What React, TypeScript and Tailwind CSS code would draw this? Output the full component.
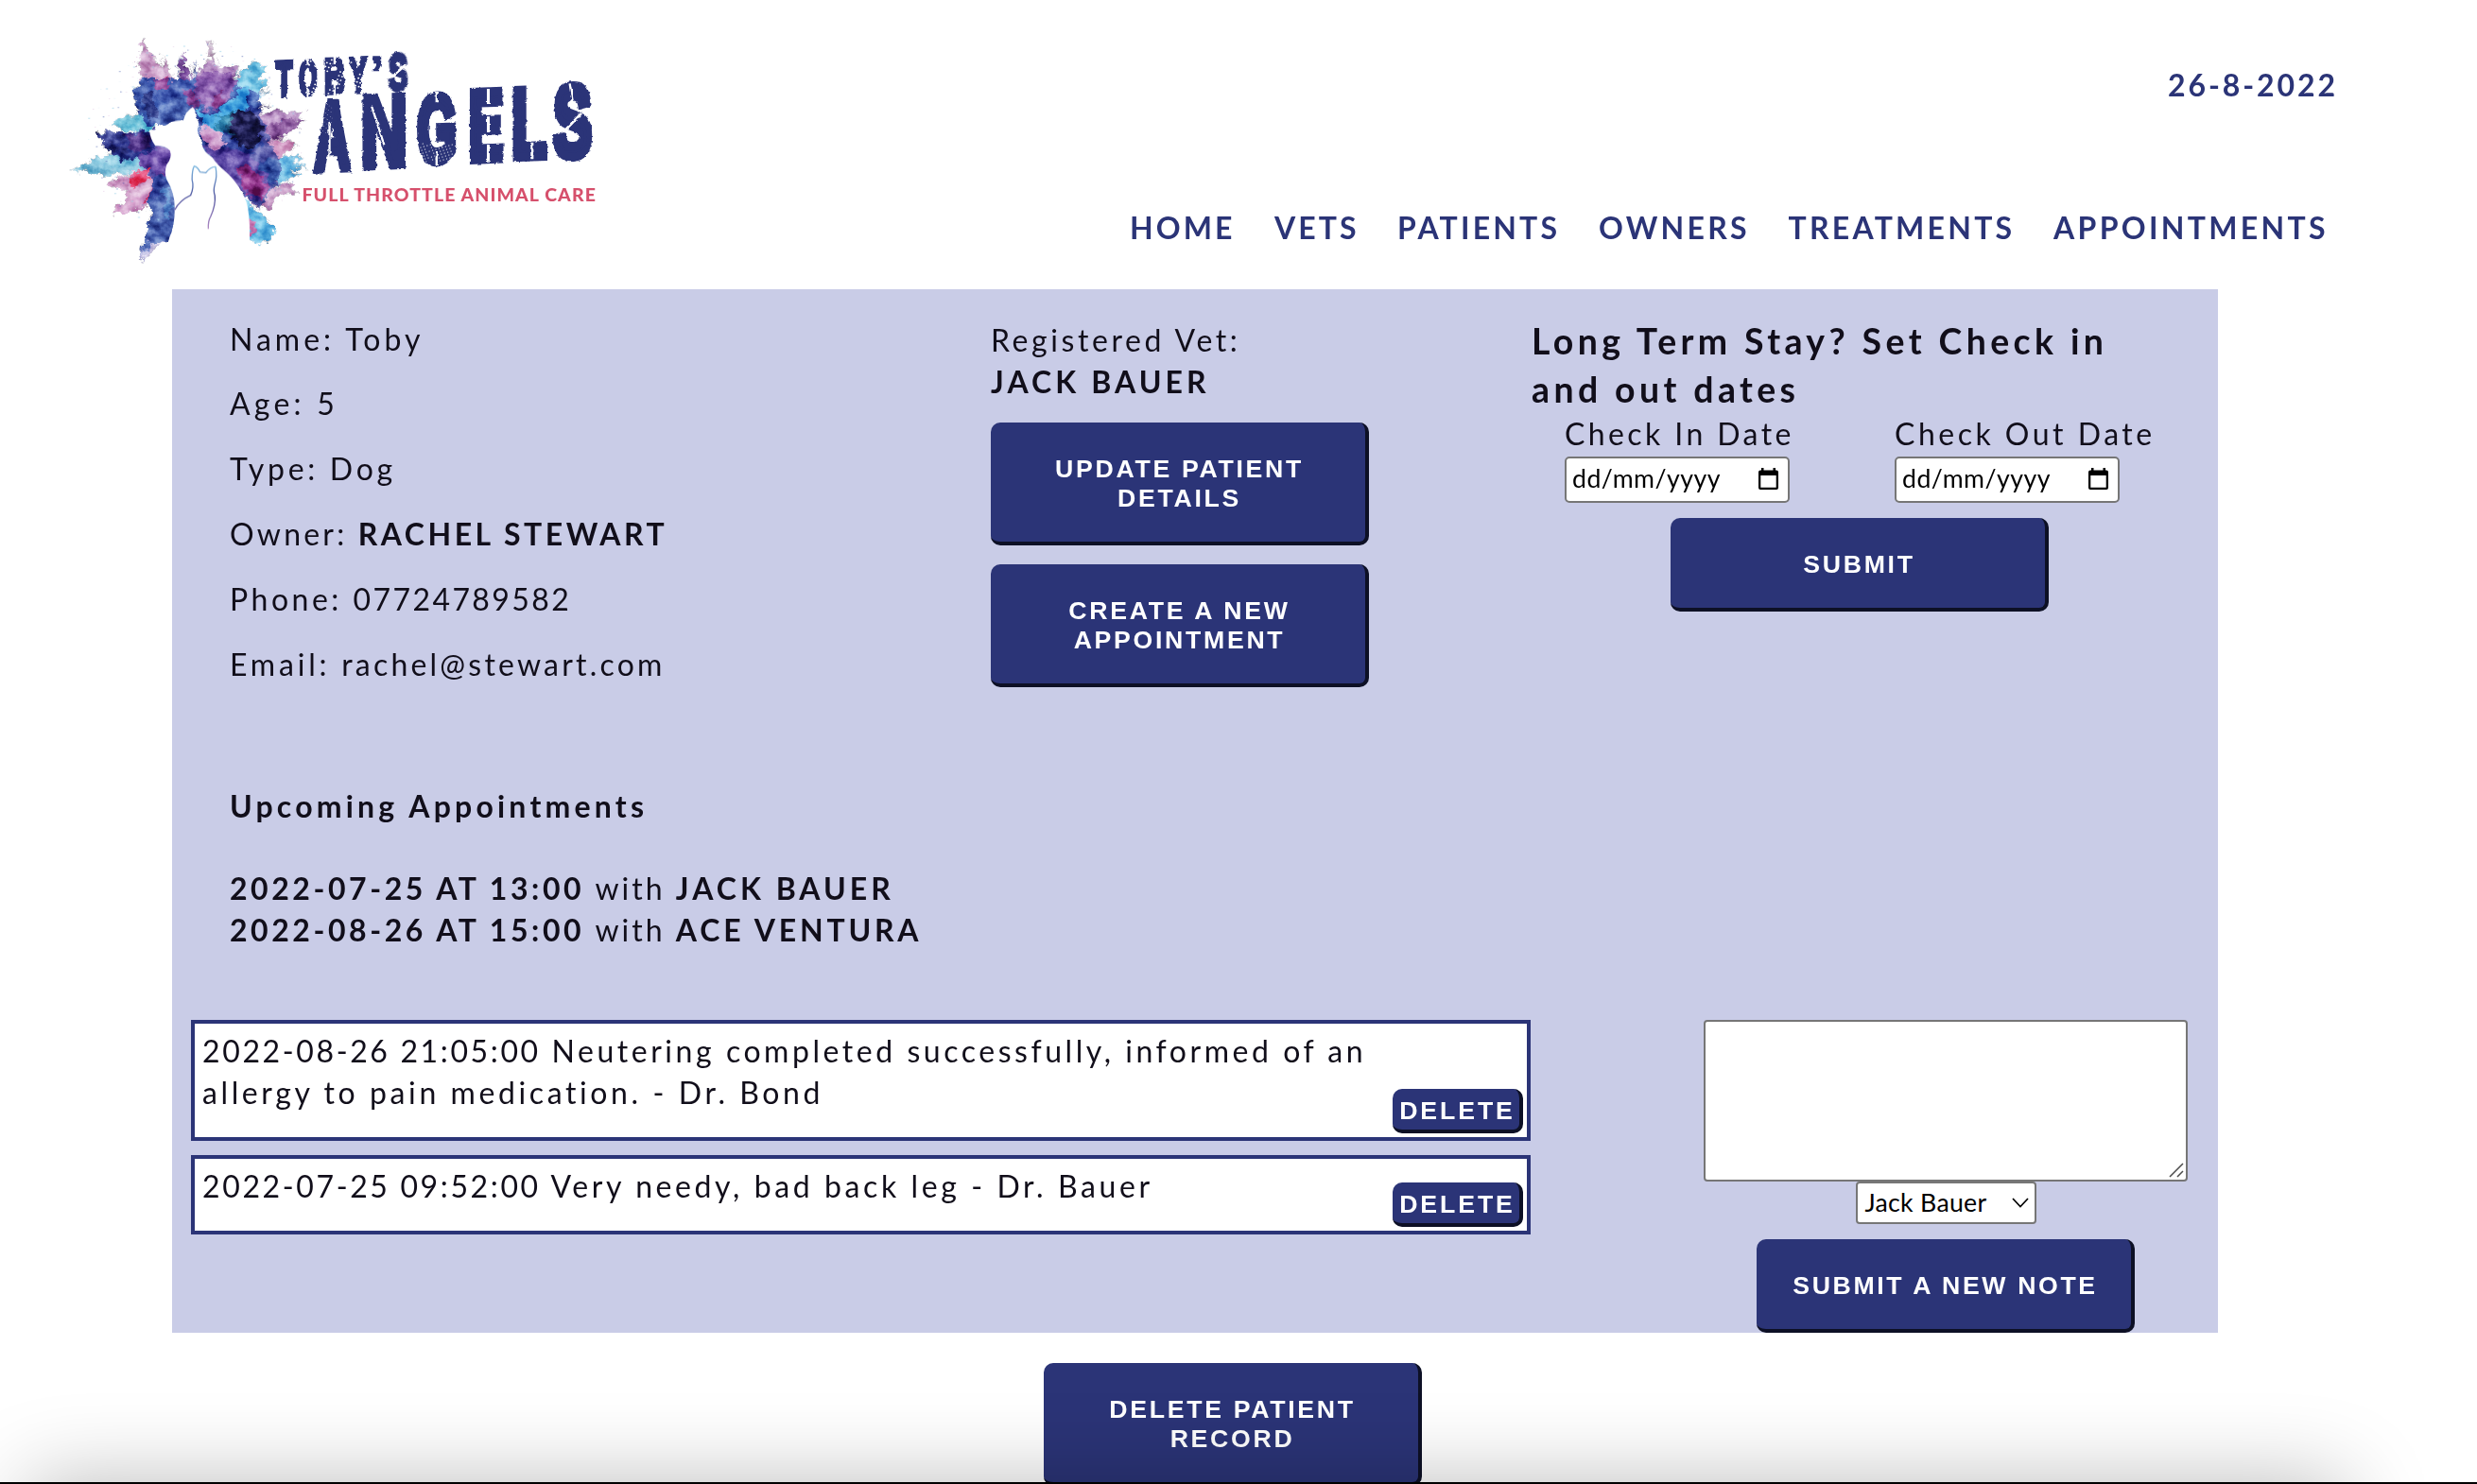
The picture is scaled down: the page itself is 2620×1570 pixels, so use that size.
import type { ReactNode } from "react";

const navItems = [
  { label: "HOME", cls: "w-[153px] tracking-[3.08px]" },
  { label: "VETS", cls: "w-[130px] tracking-[3.07px]" },
  { label: "PATIENTS", cls: "w-[213px] tracking-[3.2px]" },
  { label: "OWNERS", cls: "w-[200.5px] tracking-[3.27px]" },
  { label: "TREATMENTS", cls: "w-[280.5px] tracking-[3.25px]" },
  { label: "APPOINTMENTS", cls: "w-[294px] tracking-[3.32px]" },
];

const wordmark = [
  { ch: "T", x: 608, y: 135, w: 42, h: 108 },
  { ch: "O", x: 672, y: 131, w: 45, h: 108 },
  { ch: "B", x: 745, y: 127, w: 49, h: 107 },
  { ch: "Y", x: 811, y: 124, w: 44, h: 107 },
  { ch: "S", x: 920, y: 111, w: 47, h: 113 },
  { ch: "A", x: 714, y: 268, w: 96, h: 208 },
  { ch: "N", x: 854, y: 250, w: 102, h: 216 },
  { ch: "G", x: 1002, y: 240, w: 97, h: 213 },
  { ch: "E", x: 1149, y: 231, w: 80, h: 215 },
  { ch: "L", x: 1269, y: 224, w: 82, h: 214 },
  { ch: "S", x: 1378, y: 209, w: 95, h: 228 },
];

/* ink boxes of the bold letters at a 100 unit font size */
const ink: Record<string, [number, number, number]> = {
  T: [2, 57, 69],
  O: [4, 70, 71],
  B: [7, 62, 69],
  Y: [3, 61, 69],
  S: [3, 60, 71],
  A: [1, 71, 69],
  N: [7, 58, 69],
  G: [4, 69, 71],
  E: [7, 56, 69],
  L: [7, 52, 69],
};

const powder: { c: string; d: string; o?: number }[] = [
  { c: "#d3a5cc", d: "M225 150 L238 62 L262 110 L305 175 L320 260 L250 260 Z" },
  { c: "#b58bc0", d: "M385 170 L425 130 L440 150 L495 150 L500 200 L460 300 L400 280 Z" },
  { c: "#d9b3d6", d: "M412 105 L425 65 L434 110 L424 150 Z", o: 0.7 },
  { c: "#7b4a9a", d: "M341 150 L348 98 L360 130 L372 250 L343 250 Z" },
  { c: "#6fc6e6", d: "M480 210 L540 140 L580 145 L560 200 L590 190 L540 280 L460 320 Z" },
  { c: "#6cc3d9", d: "M150 335 L215 295 L265 300 L270 350 L190 358 Z" },
  { c: "#7cc4dc", d: "M45 480 L110 435 L200 420 L260 450 L220 490 L120 498 Z" },
  { c: "#d6a2ca", d: "M135 520 L210 490 L290 480 L275 560 L150 620 L200 560 Z" },
  { c: "#d49cc8", d: "M160 615 L230 560 L290 550 L240 600 Z" },
  { c: "#3a58ac", d: "M215 215 L240 190 L340 195 L375 190 L480 200 L560 240 L570 400 L600 540 L560 590 L500 540 L400 420 L380 290 L340 325 L255 345 L215 270 Z" },
  { c: "#4a48a0", d: "M190 370 L270 350 L320 400 L310 520 L250 500 L230 440 Z" },
  { c: "#b184bb", d: "M540 300 L600 290 L690 295 L640 340 L690 320 L620 380 L550 390 Z" },
  { c: "#845094", d: "M560 350 L640 315 L680 330 L600 390 Z" },
  { c: "#d79bc4", d: "M540 410 L620 385 L668 400 L610 440 L540 460 Z" },
  { c: "#6cbfe6", d: "M540 470 L620 440 L680 432 L650 460 L695 470 L640 480 L680 500 L600 520 Z" },
  { c: "#c592c0", d: "M560 540 L640 520 L668 550 L610 560 L590 600 L540 590 Z" },
  { c: "#2c3d94", d: "M470 240 L560 280 L590 400 L620 470 L600 540 L560 600 L500 540 L410 420 L380 290 Z", o: 0.8 },
  { c: "#232a70", d: "M235 240 L262 235 L280 290 L262 320 L245 300 Z", o: 0.8 },
  { c: "#4fb2e4", d: "M383 280 L430 310 L480 260 L530 200 L520 290 L450 370 L410 350 Z" },
  { c: "#8a5aa8", d: "M385 180 L450 160 L500 190 L460 280 L415 290 L380 250 Z" },
  { c: "#d9a5cf", d: "M395 340 L430 340 L470 400 L440 420 L405 390 Z" },
  { c: "#272f86", d: "M112 352 L180 365 L260 355 L280 400 L250 430 L180 450 L125 400 Z" },
  { c: "#472a7a", d: "M190 370 L260 365 L260 410 L210 425 Z" },
  { c: "#6a4aa4", d: "M230 430 L320 400 L320 500 L240 480 Z" },
  { c: "#e8456c", d: "M200 500 L245 472 L265 480 L250 515 L205 535 Z" },
  { c: "#d8457c", d: "M262 535 L290 490 L300 520 L275 570 L240 585 Z" },
  { c: "#3450a4", d: "M270 500 L330 480 L340 640 L315 700 L260 715 L235 770 L245 690 L265 620 L250 590 Z" },
  { c: "#5aa2da", d: "M295 530 L315 540 L312 640 L295 620 Z", o: 0.5 },
  { c: "#b8aede", d: "M232 772 L250 718 L300 700 L255 750 Z", o: 0.8 },
  { c: "#17163f", d: "M480 300 L540 290 L570 350 L545 410 L500 400 L470 350 Z" },
  { c: "#1f6f92", d: "M445 310 L485 290 L480 370 L440 360 Z", o: 0.7 },
  { c: "#5c46a0", d: "M400 400 L520 420 L590 500 L560 580 L500 540 L430 450 Z" },
  { c: "#a82c7c", d: "M500 470 L535 465 L590 540 L570 570 L520 550 Z", o: 0.7 },
  { c: "#c83c86", d: "M270 200 L300 180 L310 215 L280 230 Z", o: 0.6 },
  { c: "#b03484", d: "M352 230 L370 220 L395 265 L370 290 Z", o: 0.6 },
  { c: "#8f2c74", d: "M430 250 L458 230 L465 275 L440 290 Z", o: 0.6 },
  { c: "#62bfe8", d: "M505 550 L545 600 L605 660 L600 685 L560 715 L525 700 Z" },
  { c: "#d486b8", d: "M528 630 L548 640 L548 690 L530 695 Z" },
];

/* [from, to, reach, colours] in degrees clockwise from the right */
const sectors: [number, number, number, string[]][] = [
  [-25, -5, 275, ["#8d5fa8", "#b184bb", "#c79ccb"]],
  [-5, 10, 260, ["#d79bc4", "#b184bb"]],
  [10, 28, 290, ["#6cbfe6", "#8fd0ee", "#5a7cc4"]],
  [28, 50, 270, ["#8a4a98", "#c592c0"]],
  [148, 160, 270, ["#d6a2ca", "#c98abf"]],
  [163, 174, 300, ["#7cc4dc", "#6fb8d8"]],
  [180, 190, 270, ["#272f86", "#3c3f96"]],
  [193, 206, 240, ["#6cc3d9", "#8fd0e4"]],
  [214, 236, 255, ["#3a66b4", "#5aa8d8", "#7c6cb8"]],
  [236, 250, 285, ["#d3a5cc", "#c48abf"]],
  [254, 268, 270, ["#5a6cb8", "#7b4a9a"]],
  [274, 294, 265, ["#b58bc0", "#9a6cb0"]],
  [296, 322, 250, ["#62b8e0", "#8fd0ee", "#4a7cc0"]],
  [322, 334, 225, ["#7a4a98", "#5c46a0"]],
];

const spikes = sectors.flatMap(([from, to, reach, colours], s) =>
  Array.from({ length: Math.round((to - from) / 2) }, (_, i) => {
    const a = ((from + i * 2 + ((i * 7 + s) % 3) * 0.5) * Math.PI) / 180;
    const r = reach * (0.78 + (((i * 37 + s * 11) % 17) / 17) * 0.27);
    const p = (ang: number, rad: number) =>
      `${(395 + Math.cos(ang) * rad).toFixed(1)} ${(400 + Math.sin(ang) * rad * 1.08).toFixed(1)}`;
    return {
      d: `M${p(a - 0.05, 150)} L${p(a - 0.012, r * 0.9)} L${p(a, r)} L${p(a + 0.014, r * 0.85)} L${p(a + 0.05, 150)} Z`,
      c: colours[i % colours.length],
    };
  }),
);

const specks = Array.from({ length: 170 }, (_, i) => {
  const a = i * 2.39996;
  const r = 0.95 + ((i * 37) % 23) / 80;
  const hues = ["#7cc4e4", "#c592c8", "#4c62b0", "#9ad2ea"];
  return {
    x: 385 + Math.cos(a) * 250 * r,
    y: 385 + Math.sin(a) * 255 * r,
    s: 0.8 + (i % 4) * 0.5,
    c: hues[i % 4],
  };
}).filter((p) => !(p.x > 600 && p.y < 300) && p.y > 80 && p.y < 640 && p.x < 680);

function Logo() {
  return (
    <svg className="h-[270px] w-[600px]" viewBox="0 0 1568 810" preserveAspectRatio="none">
      <defs>
        <filter id="powder" x="-10%" y="-10%" width="120%" height="120%" colorInterpolationFilters="sRGB">
          <feTurbulence type="fractalNoise" baseFrequency="0.045" numOctaves="5" seed="8" result="n" />
          <feDisplacementMap in="SourceGraphic" in2="n" scale="38" xChannelSelector="R" yChannelSelector="G" result="d" />
          <feGaussianBlur in="d" stdDeviation="1.8" result="b" />
          <feTurbulence type="fractalNoise" baseFrequency="0.03" numOctaves="4" seed="3" result="t" />
          <feColorMatrix in="t" type="matrix" values="1.8 0 0 0 -0.38  1.8 0 0 0 -0.38  1.8 0 0 0 -0.34  0 0 0 0 1" result="g" />
          <feBlend in="g" in2="b" mode="soft-light" result="m" />
          <feComposite in="m" in2="b" operator="in" />
        </filter>
        <filter id="worn" x="-5%" y="-5%" width="110%" height="110%" colorInterpolationFilters="sRGB">
          <feTurbulence type="fractalNoise" baseFrequency="0.07" numOctaves="3" seed="5" result="n" />
          <feDisplacementMap in="SourceGraphic" in2="n" scale="9" xChannelSelector="R" yChannelSelector="G" />
        </filter>
        <linearGradient id="cat" x1="0" y1="0" x2="0" y2="1">
          <stop offset="0" stopColor="#7cb8e0" />
          <stop offset="0.5" stopColor="#4a4f9c" />
          <stop offset="1" stopColor="#b08ac4" />
        </linearGradient>
      </defs>
      <g filter="url(#powder)">
        {spikes.map((p, i) => (
          <path key={i} d={p.d} fill={p.c} opacity="0.85" />
        ))}
        {powder.map((p, i) => (
          <path key={i} d={p.d} fill={p.c} opacity={p.o ?? 0.95} />
        ))}
      </g>
      {specks.map((p, i) => (
        <circle key={i} cx={p.x} cy={p.y} r={p.s} fill={p.c} opacity="0.7" />
      ))}
      <path
        fill="#fff"
        d="M376 280 Q356 292 350 322 Q312 320 294 348 Q278 354 256 352 Q258 380 272 402 Q302 402 313 418 Q320 440 304 462 Q296 488 304 510 Q326 550 326 600 Q326 660 312 692 Q300 740 290 810 L540 810 L533 690 Q534 620 524 580 Q508 530 474 492 Q440 460 430 440 Q404 420 402 400 Q390 370 386 340 Q384 310 382 290 Z"
      />
      <path
        fill="none"
        stroke="url(#cat)"
        strokeWidth="3.5"
        strokeLinejoin="round"
        d="M326 606 Q340 576 370 560 Q380 535 374 510 Q374 480 380 467 Q390 470 396 486 L412 488 Q424 470 439 469 Q444 500 437 524 Q432 545 437 560 Q440 590 425 628 Q418 640 419 666"
      />
      <g
        filter="url(#worn)"
        fill="#2b3478"
        stroke="#2b3478"
        fontFamily="Liberation Sans"
        fontWeight="700"
        fontSize="100"
      >
        {wordmark.map((l, i) => {
          const [left, width, height] = ink[l.ch];
          const sx = l.w / width;
          const sy = l.h / height;
          return (
            <text
              key={i}
              strokeWidth="9"
              transform={`matrix(${sx} ${-0.045 * sx} 0 ${sy} ${l.x - left * sx} ${l.y + l.h + 2})`}
            >
              {l.ch}
            </text>
          );
        })}
        <text fontSize="150" strokeWidth="5" transform="translate(866 226) scale(0.9 1)">
          ’
        </text>
      </g>
      {/* stencil bridges and worn patches */}
      <g stroke="#fff" fill="none" filter="url(#worn)">
        <path strokeWidth="6" d="M694 120V150M694 218V250M768 118V145M768 210V245M1050 230V262M1050 420V465M1418 205L1428 275M870 275L905 400M754 330V440" />
        <path strokeWidth="8" d="M925 185L965 145M1400 360L1450 300M1193 222V270M1193 310V360M1193 400V452M1314 445V392" />
      </g>
      <g fill="#fff">
        {Array.from({ length: 170 }, (_, i) => (
          <circle
            key={i}
            cx={i % 3 === 0 ? 712 + ((i * 29) % 50) : i % 3 === 1 ? 1005 + ((i * 31) % 90) : 690 + ((i * 47) % 170)}
            cy={i % 3 === 0 ? 268 + ((i * 17) % 95) : i % 3 === 1 ? 395 + ((i * 13) % 60) : 130 + ((i * 19) % 110)}
            r={1 + (i % 3) * 0.8}
          />
        ))}
      </g>
      <text
        x="678"
        y="580"
        fontFamily="Lato"
        fontWeight="900"
        fontSize="54"
        fill="#d6506c"
        textLength="814"
        lengthAdjust="spacingAndGlyphs"
        letterSpacing="3"
      >
        FULL THROTTLE ANIMAL CARE
      </text>
    </svg>
  );
}

function Button({ children, className }: { children: ReactNode; className: string }) {
  return (
    <button
      className={`rounded-[10px] border-t-0 border-l-0 border-r-4 border-b-4 border-[#0d1025] bg-[#2b3477] pt-[3px] pl-[3px] text-center font-['Liberation_Sans',sans-serif] text-[26.67px] leading-[31px] font-bold whitespace-nowrap text-white ${className}`}
    >
      {children}
    </button>
  );
}

function DateField({ label, className }: { label: string; className: string }) {
  return (
    <label className={`block ${className}`}>
      <span className="block whitespace-nowrap">{label}</span>
      <span className="mt-[2px] flex h-[49px] w-[238px] items-center justify-between rounded-[5px] border-2 border-[#767676] bg-white pr-[10px] pl-[6px] text-[26.67px] leading-[44px] tracking-[0.5px] text-black">
        <span className="-mt-1">dd/mm/yyyy</span>
        <svg className="-mt-[3px] h-[23px] w-[21px]" viewBox="0 0 21 23">
          <path
            fill="#000"
            fillRule="evenodd"
            d="M3 0h2.500v2.500h10V0H18v2.500h1a2 2 0 0 1 2 2V21a2 2 0 0 1-2 2H2a2 2 0 0 1-2-2V4.500a2 2 0 0 1 2-2h1zM2.300 8v12.700h16.400V8z"
          />
        </svg>
      </span>
    </label>
  );
}

function Note({ children, className }: { children: ReactNode; className: string }) {
  return (
    <article className={`flex items-end justify-between border-4 border-[#2b3477] bg-white pr-1 pb-1 pl-[8px] ${className}`}>
      <p className="self-start pt-[6.500px] whitespace-nowrap">{children}</p>
      <Button className="h-[47px] w-[138px] shrink-0 tracking-[2.9px]">DELETE</Button>
    </article>
  );
}

export default function App() {
  return (
    <div className="relative h-[1570px] w-[2620px] overflow-hidden bg-white font-['Lato',sans-serif] text-[32px] leading-[44px] text-[#110e1a]">
      <header className="flex h-[306px] pt-5 pl-[60px] font-bold text-[#2b3477]">
        <Logo />
        <div className="ml-[535px] flex w-[1275px] flex-col justify-between pt-[47.500px] pb-[43.500px]">
          <time className="ml-[1098px] tracking-[2.9px] whitespace-nowrap">26-8-2022</time>
          <nav className="flex">
            {navItems.map((n) => (
              <a key={n.label} className={`shrink-0 whitespace-nowrap ${n.cls}`}>
                {n.label}
              </a>
            ))}
          </nav>
        </div>
      </header>

      <main className="ml-[182px] flex h-[1104px] w-[2164px] flex-col bg-[#c9cce7]">
        <section className="flex h-[508px]">
          <div className="w-[866px] pt-[18.600px] pl-[61px] leading-[68.800px]">
            <div className="tracking-[4px]">Name: Toby</div>
            <div className="tracking-[4.200px]">Age: 5</div>
            <div className="tracking-[3.700px]">Type: Dog</div>
            <div className="tracking-[3.200px]">
              Owner: <b className="tracking-[3.500px]">RACHEL STEWART</b>
            </div>
            <div className="tracking-[3.500px]">
              Phone: <span className="tracking-[2.400px]">07724789582</span>
            </div>
            <div className="tracking-[3.800px]">
              Email: <span className="tracking-[3.200px]">rachel@stewart.com</span>
            </div>
          </div>
          <div className="w-[572px] pt-[31.500px]">
            <div className="tracking-[3.58px]">Registered Vet:</div>
            <div className="font-bold tracking-[4.08px]">JACK BAUER</div>
            <Button className="mt-[21.500px] block h-[130px] w-[400px] tracking-[2.7px]">
              UPDATE PATIENT
              <br />
              DETAILS
            </Button>
            <Button className="mt-5 block h-[130px] w-[400px] tracking-[2.7px]">
              CREATE A NEW
              <br />
              APPOINTMENT
            </Button>
          </div>
          <form className="pt-[29px]">
            <h3 className="text-[37.440px] leading-[51px] font-bold tracking-[4.400px] whitespace-nowrap">
              Long Term Stay? Set Check in
              <br />
              and out dates
            </h3>
            <div className="flex pl-[35px]">
              <DateField label="Check In Date" className="w-[349px] tracking-[3.4px]" />
              <DateField label="Check Out Date" className="tracking-[3.5px]" />
            </div>
            <Button className="mt-4 ml-[147px] h-[99px] w-[400px] tracking-[2.7px]">SUBMIT</Button>
          </form>
        </section>

        <section className="h-[265px] pt-[16.500px] pl-[61px]">
          <h4 className="font-bold tracking-[4.2px]">Upcoming Appointments</h4>
          <div className="mt-[43.500px] font-bold tracking-[3.56px]">
            2022-07-25 AT 13:00 <span className="font-normal tracking-[3px]">with </span>
            <span className="tracking-[4px]">JACK BAUER</span>
          </div>
          <div className="font-bold tracking-[3.56px]">
            2022-08-26 AT 15:00 <span className="font-normal tracking-[3px]">with </span>
            <span className="tracking-[3.8px]">ACE VENTURA</span>
          </div>
        </section>

        <section className="flex pl-5">
          <div className="flex w-[1417px] flex-col gap-[15px]">
            <Note className="h-[128px] tracking-[3.54px]">
              <time className="tracking-[2.63px]">2022-08-26 21:05:00</time> Neutering completed successfully, informed of an
              <br />
              <span className="tracking-[3.6px]">allergy to pain medication. - Dr. Bond</span>
            </Note>
            <Note className="h-[84px] tracking-[3.6px]">
              <time className="tracking-[2.63px]">2022-07-25 09:52:00</time> Very needy, bad back leg - Dr. Bauer
            </Note>
          </div>
          <form className="ml-[183px] flex w-[512px] flex-col items-center">
            <div className="flex h-[171px] w-full items-end justify-end rounded-[4px] border-2 border-[#767676] bg-white p-[2px]">
              <svg className="h-[16px] w-[16px]" viewBox="0 0 16 16" fill="none" stroke="#4a4a4a" strokeWidth="1.5">
                <path d="M1 15L15 1M9 15L15 9" />
              </svg>
            </div>
            <div className="flex h-[45px] w-[191px] items-center justify-between rounded-[4px] border-2 border-[#767676] bg-white pr-[6px] pl-2 text-[26.67px] tracking-[0.3px] text-black">
              <span className="-mt-[2px] whitespace-nowrap">Jack Bauer</span>
              <svg className="h-[11px] w-[18px]" viewBox="0 0 18 11" fill="none" stroke="#000" strokeWidth="1.700">
                <path d="M1 1L9 9.500L17 1" />
              </svg>
            </div>
            <Button className="mt-4 h-[99px] w-[400px] tracking-[2.62px]">SUBMIT A NEW NOTE</Button>
          </form>
        </section>
      </main>

      <Button className="mt-8 ml-[1104px] block h-[130px] w-[400px] tracking-[2.7px]">
        DELETE PATIENT
        <br />
        RECORD
      </Button>

      <div className="absolute top-[1568px] right-[140px] left-[30px] h-[200px] shadow-[0_0_90px_rgba(0,0,0,0.27)]" />
      <div className="absolute bottom-0 left-0 h-[2px] w-full bg-black" />
    </div>
  );
}
